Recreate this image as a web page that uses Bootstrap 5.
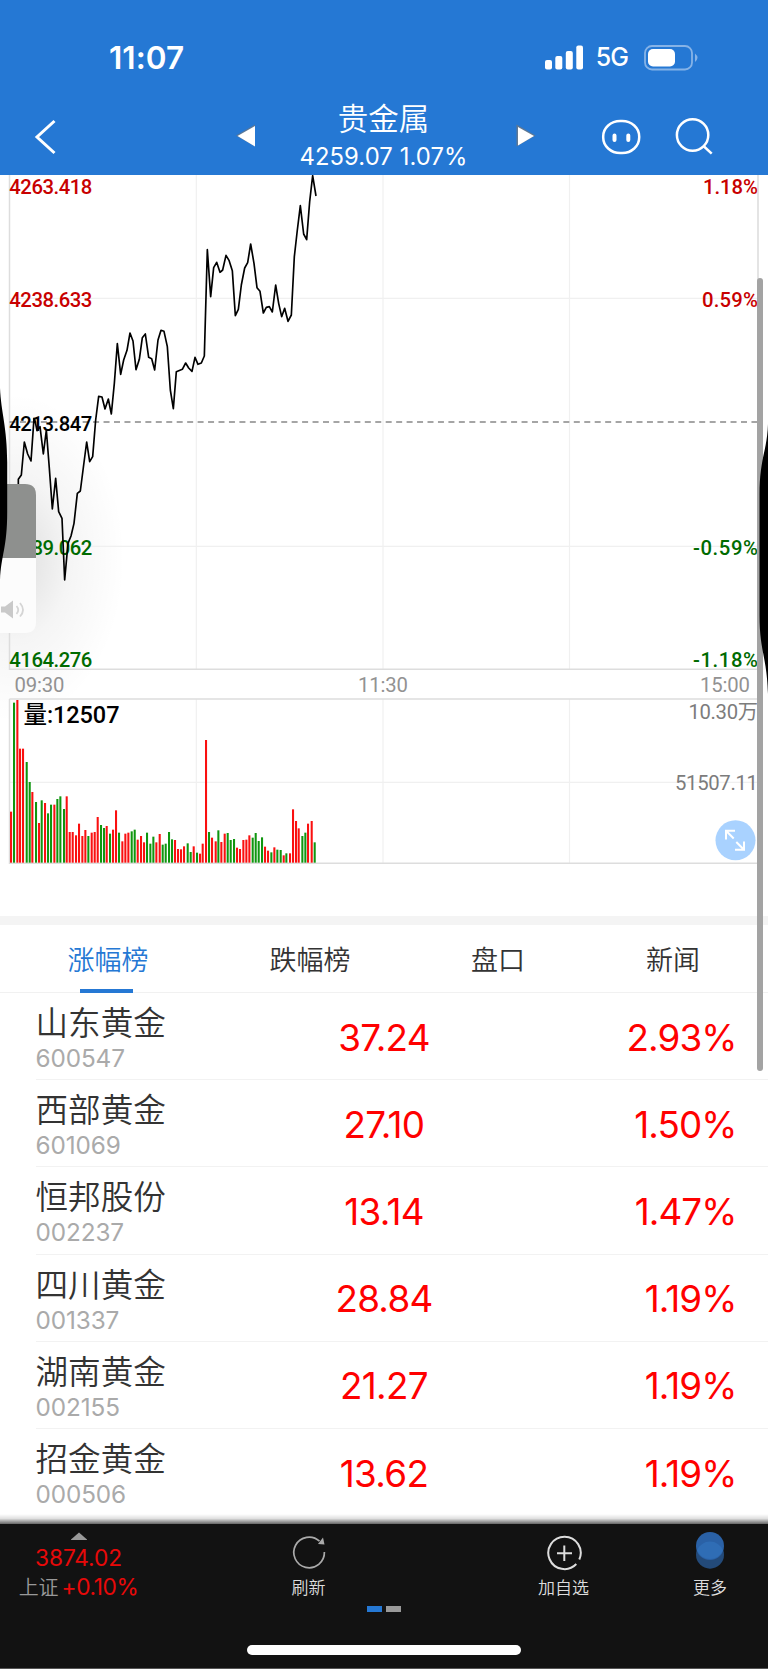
<!DOCTYPE html>
<html lang="zh-CN">
<head>
<meta charset="utf-8">
<meta name="viewport" content="width=device-width, initial-scale=1">
<title>贵金属</title>
<link href="https://cdn.jsdelivr.net/npm/bootstrap@5.3.0/dist/css/bootstrap.min.css" rel="stylesheet">
<style>
body{font-family:Inter,"Noto Sans CJK SC",sans-serif;background:#fff;color:#333;line-height:1}
.screen{width:768px;height:1669px}
svg{display:block}
.topbar{height:175px;background:#2578d4;color:#fff}
.status{height:115px;padding:0 69px 0 109px}
.clock{font-size:31.5px;font-weight:600;letter-spacing:.05px}
.net{font-size:25px;font-weight:500;letter-spacing:-1px}
.navrow{height:60px;margin-top:-14px}
.quote-title{font-size:30.5px;line-height:36px;font-weight:350}
.quote-value{font-size:23.8px;line-height:30px;letter-spacing:.1px;margin-top:5px}
.chart{height:741px}
.chart text{font-family:Roboto,"Noto Sans CJK SC",sans-serif;font-size:20.3px;font-weight:500}
.chart .axis text{font-weight:400}
.divider{height:9px;background:#f4f4f4}
.tabs{height:68px;border-bottom:1px solid #f1f1f1;font-size:27px;font-weight:350}
.tab{height:68px;color:#333;padding-top:2px}
.tab-on{color:#2578d4}
.tab-on::after{content:"";position:absolute;left:80px;top:64px;width:53px;height:4px;background:#2578d4}
.stock{height:87.2px;margin-left:35.5px;padding-right:31.5px;border-bottom:1px solid #f2f2f2}
.stock:last-child{border:0}
.stock-name{font-size:32.6px;line-height:36px;font-weight:350;margin-top:12px}
.stock-code{font-size:24.3px;line-height:24px;color:#aaa;margin-top:5px;letter-spacing:-.1px}
.num{font-size:36.8px;color:#f00;letter-spacing:-.7px;padding-top:4px}
.col-name{width:204px}.col-price{width:289px}.col-pct{width:208px;letter-spacing:-.9px}
.footbar{height:145px;background:#121212;color:#ddd;border-bottom:1px solid #555}
.footbar::before{content:"";position:absolute;left:0;right:0;top:-10px;height:10px;background:linear-gradient(transparent,rgba(0,0,0,.12) 45%,rgba(0,0,0,.6))}
.cell{height:76px;padding-top:8px}
.cap{font-size:17px;line-height:20px;font-weight:350}
.idx{font-size:22.7px;line-height:24px;color:#e80909;letter-spacing:-.1px}
.idx-name{font-size:20px;color:#999;font-weight:350}
.dash{width:14.5px;height:6px;background:#999}
.dash-on{background:#2578d4}
.home{width:274px;height:9.5px;border-radius:5px;background:#fff;margin-top:33px}
.scrollthumb{left:757.4px;top:278px;width:5.3px;height:793px;border-radius:3px;background:#a3a3a3}
.overlay{left:0;top:0;pointer-events:none}
</style>
</head>
<body>
<main class="screen position-relative overflow-hidden">
<header class="topbar">
  <div class="status d-flex align-items-center justify-content-between">
    <div class="clock">11:07</div>
    <div class="d-flex align-items-center">
      <svg width="39" height="25" fill="#fff"><rect x="0" y="15" width="7" height="9.5" rx="2"/><rect x="10.3" y="11" width="7" height="13.5" rx="2"/><rect x="20.8" y="6" width="7" height="18.5" rx="2"/><rect x="31.3" y=".5" width="6.7" height="24" rx="2"/></svg>
      <span class="net" style="margin-left:12px">5G</span>
      <svg width="55" height="26" class="ms-3"><rect x="1" y="1" width="47" height="23.5" rx="7" fill="none" stroke="#86b3e7" stroke-width="1.8"/><rect x="4" y="4" width="27" height="17.5" rx="5" fill="#fff"/><path d="M51 8.5q5 4.2 0 8.5z" fill="#86b3e7"/></svg>
    </div>
  </div>
  <div class="navrow d-flex">
    <div style="width:236px"><svg width="70" height="60" style="margin-top:4px"><path d="M54.5 16 37 32l17.500 16" fill="none" stroke="#fff" stroke-width="3"/></svg></div>
    <svg width="30" height="60"><path d="M19 23.500v22L0 34.500z" fill="#777" opacity=".65"/><path d="M19 25v20.500L1.500 35z" fill="#fff"/></svg>
    <div class="text-center" style="width:235px">
      <div class="quote-title">贵金属</div>
      <div class="quote-value text-nowrap">4259.07 1.07%</div>
    </div>
    <svg width="41" height="60"><path d="M15.500 23.500v22l19-11z" fill="#777" opacity=".7"/><path d="M17 26v18.500l16-9.500z" fill="#fff"/></svg>
    <svg width="226" height="60" fill="none" stroke="#fff" stroke-width="2.5"><rect x="61.200" y="20" width="36" height="32" rx="17" ry="15.500"/><path stroke-width="4" stroke-linecap="round" d="M72.500 34.500v4.500M86.300 34.500v4.500"/><circle cx="150.600" cy="34" r="15.700"/><path d="m161.500 45 8.200 7.700"/></svg>
  </div>
</header>

<section class="chart">
<svg width="768" height="741" viewBox="0 175 768 741">
  <defs><radialGradient id="glow"><stop offset="0" stop-color="#000" stop-opacity=".13"/><stop offset=".5" stop-color="#000" stop-opacity=".04"/><stop offset="1" stop-color="#000" stop-opacity="0"/></radialGradient></defs>
  <ellipse cx="15" cy="558" rx="110" ry="165" fill="url(#glow)"/>
  <g stroke="#f0f0f0" stroke-width="1.200"><path d="M196.300 175v494M383 175v494M569.500 175v494M9 298.400h749M9 546.300h749M196.300 699v164M383 699v164M569.500 699v164M9 782.400h749"/></g>
  <path d="M9.500 175v494.300H758M9.500 699v164.200H758M9.500 699H758" fill="none" stroke="#ddd" stroke-width="1.500"/><path d="M758 175v494M758 699v164" stroke="#e4e4e4" stroke-width="2"/>
  <path d="M9.500 422H758" stroke="#888" stroke-width="1.300" stroke-dasharray="6 4.450"/>
  <g fill="#c80000"><text x="9.300" y="194" textLength="83">4263.418</text><text x="9.300" y="307" textLength="83">4238.633</text><text x="703" y="194" textLength="55">1.18%</text><text x="702" y="307" textLength="56">0.59%</text></g>
  <text x="9.300" y="430.500" textLength="83" fill="#000">4213.847</text>
  <g fill="#006b00"><text x="9.300" y="555" textLength="83">4189.062</text><text x="9.300" y="667.300" textLength="83">4164.276</text><text x="693" y="555" textLength="65">-0.59%</text><text x="693" y="667.300" textLength="65">-1.18%</text></g>
  <g class="axis" fill="#929292"><text x="14.500" y="691.500" textLength="50">09:30</text><text x="358" y="691.500" textLength="50">11:30</text><text x="700" y="691.500" textLength="50">15:00</text></g>
  <g class="axis" fill="#7c7c7c"><text x="688.500" y="719.300" textLength="69.500">10.30万</text><text x="675" y="790" textLength="83">51507.11</text></g>
  <g id="bars" transform="translate(0 670) scale(.33333)"></g>
  <text x="23.500" y="722.500" textLength="96" fill="#000" style="font-size:23.500px;font-weight:500">量:12507</text>
  <polyline transform="translate(0 170) scale(.33333)" fill="none" stroke="#000" stroke-width="5" stroke-linejoin="round" points="55,943 55,928 64,915 73,816 83,852 93,873 102,745 105,752 111,782 120,770 130,852 139,780 148,895 157,1017 167,925 176,1025 186,1045 194,1230 204,1120 213,1098 222,1060 232,970 241,963 251,885 260,816 269,875 278,860 287,750 296,679 306,681 315,717 325,687 334,732 343,640 352,521 362,613 371,570 381,541 390,489 399,513 408,599 418,568 427,503 436,492 446,562 455,566 464,600 474,510 483,481 492,484 502,530 511,660 520,716 529,605 547,598 557,579 566,594 576,604 585,562 594,583 604,579 613,558 622,239 632,380 641,293 650,277 660,307 668,300 678,256 687,271 697,302 706,437 715,418 724,345 734,294 743,278 752,222 762,280 771,353 780,364 790,429 799,412 808,410 817,426 827,345 836,400 845,440 854,415 864,454 874,435 883,260 892,180 901,107 911,192 920,209 929,95 938,17 948,78"/>
  <circle cx="735.500" cy="840.300" r="20" fill="#a9d2ff"/>
  <g fill="none" stroke="#fff" stroke-width="2"><path d="M726 839.500v-8.700h9M726 830.800l7.700 7.700M744 841.500v8.200h-9M744 849.700l-7.700-7.700"/></g>
</svg>
</section>

<div class="divider"></div>
<nav class="tabs d-flex">
  <div class="tab tab-on position-relative d-flex align-items-center justify-content-center" style="width:216px">涨幅榜</div>
  <div class="tab d-flex align-items-center justify-content-center" style="width:188px">跌幅榜</div>
  <div class="tab d-flex align-items-center justify-content-center" style="width:188px">盘口</div>
  <div class="tab d-flex align-items-center justify-content-center" style="width:162px">新闻</div>
</nav>
<section id="stocks"></section>

<footer class="footbar position-absolute start-0 end-0 bottom-0">
  <div class="d-flex">
    <div class="cell d-flex flex-column align-items-center" style="width:157px">
      <svg width="16" height="9"><path d="M0 9v-1.500L8 .5l8 7V9z" fill="#999"/></svg>
      <div class="idx" style="margin-top:6px">3874.02</div>
      <div class="idx text-nowrap" style="margin-top:5px"><span class="idx-name">上证</span><span style="margin-left:3px;letter-spacing:-.4px">+0.10%</span></div>
    </div>
    <div class="cell d-flex flex-column align-items-center" style="width:303px">
      <svg width="36" height="42" fill="none" stroke="#aaa" stroke-width="1.700"><path d="M28.500 9.200A15.300 15.300 0 1 0 33.400 20"/><path d="m32 5.500 1.500 7-6.500-.500z" fill="#aaa" stroke="none"/></svg>
      <div class="cap" style="margin-top:4px">刷新</div>
    </div>
    <div class="cell d-flex flex-column align-items-center" style="width:207px">
      <svg width="36" height="42" fill="none" stroke="#ddd" stroke-width="2"><path d="M33.300 27.500A16.200 16.200 0 1 0 30.300 32"/><path d="M18.300 13.500v15.500M11 21.200h15"/></svg>
      <div class="cap" style="margin-top:4px">加自选</div>
    </div>
    <div class="cell d-flex flex-column align-items-center" style="width:86px">
      <svg width="30" height="42"><circle cx="15" cy="22.700" r="14" fill="#234a79"/><circle cx="15" cy="14" r="14" fill="#2a61a6"/><path d="M2 18.300a14 14 0 0 1 26 0 14 14 0 0 1-26 0z" fill="#2f6db5"/></svg>
      <div class="cap" style="margin-top:4px">更多</div>
    </div>
  </div>
  <div class="d-flex justify-content-center" style="gap:4.500px;margin-top:6px"><i class="dash dash-on"></i><i class="dash"></i></div>
  <div class="home mx-auto"></div>
</footer>

<div class="scrollthumb position-absolute"></div>
<svg class="overlay position-absolute" width="768" height="900">
  <path d="M0 484h25q11 0 11 11v63H0z" fill="#8e908e"/>
  <path d="M0 558h36v64q0 11-11 11H0z" fill="#fcfcfc"/>
  <path d="M1 606.500h4l8-6v18l-8-6H1z" fill="#c9c9c9"/><path d="M16.500 606q3.500 4 0 8M20 603q6 7 0 13.500" fill="none" stroke="#d5d5d5" stroke-width="1.800"/>
  <path d="M0 388C1 412 7.200 428 7.200 462v50C7.200 548 1 555 0 580z"/>
  <path d="M768 424C767 452 759.500 458 759.500 495v120C759.500 652 767 656 768 694z"/>
</svg>
</main>
<script>
// Minute volumes: bar centre, bar top, direction; every bar ends on the base line.
const volume = "33:425r 42:98g 52:90r 60:236r 69:236r 80:276g 89:336g 97:366r 108:396g 117:459r 125:391g 135:399r 144:430g 153:404g 163:404r 172:387g 181:379g 192:417g 200:379r 209:486r 218:486r 228:496r 237:461r 247:498r 256:480r 265:498g 275:488r 284:486r 293:441r 303:465g 312:474g 320:468r 330:491g 339:479r 348:421r 357:488g 367:514r 376:491r 385:488r 395:484g 404:479g 413:509r 423:498r 432:517r 441:488g 451:521g 460:500g 469:517r 479:492r 488:524g 497:521g 507:486g 516:508g 525:510r 534:537r 543:538r 552:529r 563:520g 572:546g 581:529r 591:548g 600:551r 608:521r 618:210r 627:486g 636:503r 647:514r 655:481g 664:516r 674:491r 683:489g 692:510g 702:507g 711:533r 720:537r 730:510r 739:509r 748:496r 758:503g 767:489g 776:513g 786:502g 795:530r 804:542r 814:547g 823:532r 832:539g 842:540g 851:556r 859:550g 870:550r 879:418r 888:453r 896:475r 907:498g 916:488g 924:461r 935:453r 944:517g";
document.getElementById("bars").innerHTML = volume.split(" ").map(b => {
  const [, x, y, d] = b.match(/(\d+):(\d+)(.)/);
  return `<rect x="${x - 3}" y="${y}" width="6.200" height="${578 - y}" fill="${d === "r" ? "#fa1010" : "#0f960f"}"/>`;
}).join("");
const stocks = [["山东黄金","600547","37.24","2.93%"],["西部黄金","601069","27.10","1.50%"],["恒邦股份","002237","13.14","1.47%"],["四川黄金","001337","28.84","1.19%"],["湖南黄金","002155","21.27","1.19%"],["招金黄金","000506","13.62","1.19%"]];
document.getElementById("stocks").innerHTML = stocks.map(([name, code, price, pct]) => `
  <div class="stock d-flex align-items-center">
    <div class="col-name align-self-start"><div class="stock-name">${name}</div><div class="stock-code">${code}</div></div>
    <div class="col-price num text-center">${price}</div>
    <div class="col-pct num text-end">${pct}</div>
  </div>`).join("");
</script>
<script src="https://cdn.jsdelivr.net/npm/bootstrap@5.3.0/dist/js/bootstrap.bundle.min.js"></script>
</body>
</html>
